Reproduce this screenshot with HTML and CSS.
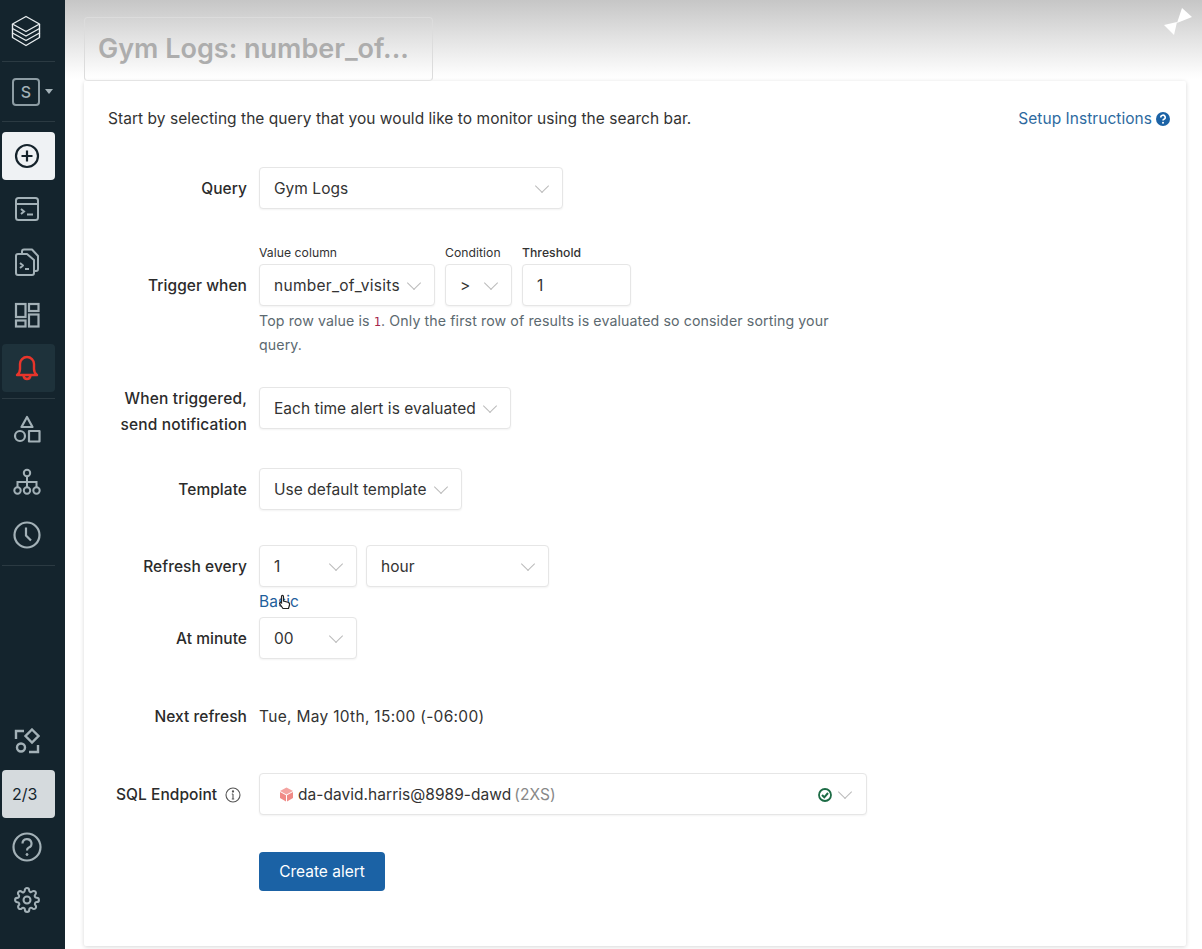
FILE: index.html
```html
<!doctype html>
<html>
<head>
<meta charset="UTF-8">
<title>Gym Logs: number_of_visits</title>
<link rel="stylesheet" href="styles.css">
</head>
<body>
<nav class="sidebar">
  <div class="logo">
    <svg width="30" height="32" viewBox="0 0 30 32" fill="none" stroke="#e8edef" stroke-width="1.400" stroke-linejoin="round"><path d="M15 1.500 28.500 9 15 16.500 1.500 9Z"/><path d="M1.500 9V13.500L15 21 28.500 13.500V9"/><path d="M1.500 13.500V18L15 25.500 28.500 18V13.500"/><path d="M1.500 18V22.500L15 30.500 28.500 22.500V18"/></svg>
  </div>
  <div class="side-line"></div>
  <div class="workspace"><span class="ws-box">S</span><span class="ws-caret"></span></div>
  <div class="side-line"></div>
  <div class="side-group">
    <a class="side-item new">
      <svg width="26" height="26" viewBox="0 0 26 26" fill="none" stroke="#15232b" stroke-width="2.200"><circle cx="13" cy="13" r="11"/><path d="M13 7.500V18.500M7.500 13H18.500"/></svg>
    </a>
    <a class="side-item">
      <svg width="26" height="26" viewBox="0 0 26 26" fill="none" stroke="#a3b1b7" stroke-width="2"><rect x="2" y="2" width="22" height="22" rx="2.500"/><path d="M2 8H24M7 13l3 2.500-3 2.500M13 18.500H19"/></svg>
    </a>
    <a class="side-item">
      <svg width="26" height="28" viewBox="0 0 26 28" fill="none" stroke="#a3b1b7" stroke-width="2" stroke-linejoin="round"><path d="M8 5V3.500Q8 1.500 10 1.500H18L24 8V21Q24 23 22 23H20"/><path d="M2 8Q2 6 4 6H13L20 12V25Q20 27 18 27H4Q2 27 2 25Z"/><path d="M6 15l3 2.500-3 2.500M11 21H15"/></svg>
    </a>
    <a class="side-item">
      <svg width="26" height="26" viewBox="0 0 26 26" fill="none" stroke="#a3b1b7" stroke-width="2.200"><rect x="2" y="2" width="9.500" height="13"/><rect x="15" y="2" width="9.500" height="7"/><rect x="2" y="18.500" width="9.500" height="6"/><rect x="15" y="12.500" width="9.500" height="12"/></svg>
    </a>
    <a class="side-item alert">
      <svg width="26" height="28" viewBox="0 0 26 28" fill="none" stroke="#e8352b" stroke-width="2.400" stroke-linejoin="round"><path d="M3 21Q6 19 6 15V10A7 7 0 0 1 20 10V15Q20 19 23 21Z"/><path d="M9.500 21.500Q10 25 13 25T16.500 21.500"/></svg>
    </a>
  </div>
  <div class="side-line gap-line"></div>
  <div class="side-group">
    <a class="side-item">
      <svg width="28" height="28" viewBox="0 0 28 28" fill="none" stroke="#a3b1b7" stroke-width="2.200" stroke-linejoin="round"><path d="M14 2 19.500 12H8.500Z"/><circle cx="7" cy="21" r="5"/><rect x="16" y="16" width="10.500" height="10.500"/></svg>
    </a>
    <a class="side-item">
      <svg width="28" height="28" viewBox="0 0 28 28" fill="none" stroke="#a3b1b7" stroke-width="2"><circle cx="14" cy="5" r="3.200"/><circle cx="4.500" cy="22.500" r="3.200"/><circle cx="14" cy="22.500" r="3.200"/><circle cx="23.500" cy="22.500" r="3.200"/><path d="M14 8.200V19.300M4.500 19.300V14H23.500V19.300"/></svg>
    </a>
    <a class="side-item">
      <svg width="28" height="28" viewBox="0 0 28 28" fill="none" stroke="#a3b1b7" stroke-width="2.200"><circle cx="14" cy="14" r="12.500"/><path d="M13 6.500V14.500L18 19.500"/></svg>
    </a>
  </div>
  <div class="side-line gap-line"></div>
  <div class="side-group bottom">
    <a class="side-item">
      <svg width="26" height="26" viewBox="0 0 26 26" fill="none" stroke="#a3b1b7" stroke-width="2.400"><path d="M2 11V3H10"/><path d="M18 1.500 24.500 8 18 14.500 11.500 8Z"/><circle cx="7" cy="19.500" r="4"/><path d="M15 24H24V17"/></svg>
    </a>
    <a class="side-item progress">2/3</a>
    <a class="side-item">
      <svg width="30" height="30" viewBox="0 0 30 30" fill="none" stroke="#a3b1b7" stroke-width="2.200"><circle cx="15" cy="15" r="13.500"/><path d="M10.500 11.500A4.500 4.500 0 1 1 16.500 15.800Q15 16.500 15 18.500"/><circle cx="15" cy="22.500" r="1" fill="#a3b1b7" stroke-width="1"/></svg>
    </a>
    <a class="side-item">
      <svg width="26" height="26" viewBox="0 0 24 24" fill="none" stroke="#a3b1b7" stroke-width="1.900" stroke-linejoin="round"><circle cx="12" cy="12" r="3.200"/><path d="M19.400 15a1.650 1.650 0 0 0 .33 1.820l.06.06a2 2 0 1 1-2.830 2.830l-.06-.06a1.650 1.650 0 0 0-2.820 1.170V21a2 2 0 0 1-4 0v-.09A1.650 1.650 0 0 0 7.260 19.700l-.06.06a2 2 0 1 1-2.830-2.830l.06-.06a1.650 1.650 0 0 0-1.170-2.820H3a2 2 0 0 1 0-4h.09A1.650 1.650 0 0 0 4.300 7.260l-.06-.06a2 2 0 1 1 2.830-2.830l.06.06a1.650 1.650 0 0 0 2.820-1.170V3a2 2 0 0 1 4 0v.09a1.650 1.650 0 0 0 2.790 1.170l.06-.06a2 2 0 1 1 2.830 2.830l-.06.06a1.650 1.650 0 0 0 1.170 2.820H21a2 2 0 0 1 0 4h-.09A1.650 1.650 0 0 0 19.400 15z"/></svg>
    </a>
  </div>
</nav>

<main class="main">
  <svg class="bowtie" width="30" height="30" viewBox="0 0 30 30" fill="#fff"><path d="M19 2 29 11 14 17Z"/><path d="M1 19 14 16 11 29Z"/></svg>
  <div class="title-tab">Gym Logs: number_of...</div>
  <section class="card">
    <div class="intro">
      <span>Start by selecting the query that you would like to monitor using the search bar.</span>
      <a class="setup">Setup Instructions
        <svg width="14" height="14" viewBox="0 0 14 14"><circle cx="7" cy="7" r="7" fill="#1b62a5"/><path d="M4.800 5.500A2.200 2.200 0 1 1 8 7.300Q7 7.800 7 8.600" fill="none" stroke="#fff" stroke-width="1.600"/><circle cx="7" cy="10.800" r="1" fill="#fff"/></svg>
      </a>
    </div>

    <div class="row row-query">
      <label class="label">Query</label>
      <div class="select w-query">Gym Logs<i class="chev"></i></div>
    </div>

    <div class="row row-trigger">
      <label class="label trigger-label">Trigger when</label>
      <div class="control">
        <div class="fields">
          <div class="field">
            <span class="mini">Value column</span>
            <div class="select w-column">number_of_visits<i class="chev"></i></div>
          </div>
          <div class="field">
            <span class="mini">Condition</span>
            <div class="select w-cond">&gt;<i class="chev"></i></div>
          </div>
          <div class="field">
            <span class="mini strong">Threshold</span>
            <div class="select w-thresh">1</div>
          </div>
        </div>
        <p class="help">Top row value is <span class="red">1</span>. Only the first row of results is evaluated so consider sorting your query.</p>
      </div>
    </div>

    <div class="row row-notify">
      <label class="label two-line">When triggered, send notification</label>
      <div class="select w-notify">Each time alert is evaluated<i class="chev"></i></div>
    </div>

    <div class="row row-template">
      <label class="label">Template</label>
      <div class="select w-template">Use default template<i class="chev"></i></div>
    </div>

    <div class="row row-refresh">
      <label class="label">Refresh every</label>
      <div class="fields gap-9">
        <div class="select w-small">1<i class="chev"></i></div>
        <div class="select w-unit">hour<i class="chev"></i></div>
      </div>
    </div>
    <div class="row">
      <span class="label"></span>
      <a class="basic">Basic
        <svg class="cursor" width="14" height="16" viewBox="0 0 14 16"><path d="M4 1.500Q5.500 1 5.500 3V7L9 8Q12 8.500 11.500 11L10.500 14.500H5L1.500 9.500Q1.500 8 3.500 9V3Q3.500 2 4 1.500Z" fill="#fff" stroke="#222" stroke-width="1.200"/></svg>
      </a>
    </div>
    <div class="row row-minute">
      <label class="label">At minute</label>
      <div class="select w-small">00<i class="chev"></i></div>
    </div>

    <div class="row row-next">
      <label class="label">Next refresh</label>
      <div class="plain">Tue, May 10th, 15:00 (-06:00)</div>
    </div>

    <div class="row row-sql">
      <label class="label sql-label">SQL Endpoint
        <svg width="16" height="16" viewBox="0 0 16 16" fill="none" stroke="#555" stroke-width="1.100"><circle cx="8" cy="8" r="7"/><path d="M8 7V12M6.800 12H9.200M6.800 7H8" /><circle cx="8" cy="4.500" r=".6" fill="#555"/></svg>
      </label>
      <div class="select w-sql">
        <svg class="cube" width="15" height="15" viewBox="0 0 15 15"><path d="M7.500 .5 14 4 7.500 7.500 1 4Z" fill="#f4a3a0"/><path d="M1 5 7 8.300V14.500L1 11Z" fill="#f08a86"/><path d="M14 5 8 8.300V14.500L14 11Z" fill="#f08a86"/></svg>
        <span>da-david.harris@8989-dawd</span><span class="muted">(2XS)</span>
        <svg class="ok" width="14" height="14" viewBox="0 0 14 14" fill="none"><circle cx="7" cy="7" r="6" stroke="#1c6b45" stroke-width="1.800"/><path d="M4 7l2.300 2.300L10 5" stroke="#1c6b45" stroke-width="2"/></svg>
        <i class="chev end"></i>
      </div>
    </div>

    <div class="row row-submit">
      <span class="label"></span>
      <button class="primary">Create alert</button>
    </div>
  </section>
</main>
</body>
</html>
```

FILE: styles.css
```css
* { box-sizing: border-box; }
html, body { height: 100%; }
body {
  margin: 0;
  display: flex;
  height: 949px;
  overflow: hidden;
  font: 15.5px/24px Inter, "Noto Sans", sans-serif;
  letter-spacing: .04px;
  color: #333;
  background: #fff;
}

/* sidebar */
.sidebar {
  width: 65px;
  flex: none;
  display: flex;
  flex-direction: column;
  padding: 0 10px 25px 2px;
  background: #14242d;
  color: #a3b1b7;
}
.logo { height: 61px; display: flex; align-items: center; justify-content: center; padding-right: 5px; }
.side-line { height: 1px; background: #2b3a42; flex: none; }
.gap-line { margin: 6px 0 6px; }
.workspace { height: 59px; display: flex; align-items: center; padding-left: 10px; gap: 5px; }
.ws-box {
  width: 28px;
  height: 28px;
  border: 2px solid #8d9ca3;
  border-radius: 4px;
  display: flex;
  align-items: center;
  justify-content: center;
  font-size: 16px;
  font-weight: 500;
}
.ws-caret { width: 0; height: 0; border: 4px solid transparent; border-top: 5px solid #a3b1b7; border-bottom: 0; }
.side-group { display: flex; flex-direction: column; gap: 5px; margin-top: 10px; }
.side-group + .side-line { margin-top: 6px; }
.gap-line + .side-group { margin-top: 0; }
.bottom { margin-top: auto !important; gap: 5px; }
.side-item {
  height: 48px;
  display: flex;
  align-items: center;
  justify-content: center;
  padding-right: 3px;
  border-radius: 4px;
}
.new { background: #eff2f4; }
.alert { background: #1e323b; }
.progress { background: #d5dadd; color: #14242d; font-size: 16px; justify-content: flex-start; padding-left: 10px; }

/* main area */
.main {
  flex: 1;
  position: relative;
  display: flex;
  flex-direction: column;
  padding: 17px 16px 3px 19px;
  background: linear-gradient(#c6c6c6 0, #e4e4e4 40px, #fdfdfd 75px, #fff 80px);
}
.bowtie { position: absolute; top: 6px; right: 9px; }
.title-tab {
  width: 349px;
  height: 64px;
  flex: none;
  padding: 13px 0 0 13px;
  border: 1px solid #dcdcdc;
  border-bottom-color: #eee;
  border-radius: 4px;
  font-size: 27px;
  line-height: 36px;
  font-weight: 600;
  letter-spacing: 0;
  color: #adadad;
  white-space: nowrap;
}
.card {
  flex: 1;
  padding: 25px 16px 0 24px;
  background: #fff;
  border-radius: 2px;
  box-shadow: 0 1px 4px rgba(0, 0, 0, .16);
}
.intro { display: flex; justify-content: space-between; align-items: center; height: 24px; margin-bottom: 37px; padding-top: 1px; }
.setup { color: #2d6a9f; display: flex; align-items: center; gap: 4px; }

/* form rows */
.row { display: flex; gap: 12px; }
.label { width: 139px; flex: none; text-align: right; font-weight: 500; letter-spacing: .05px; color: #2b2b2b; line-height: 43px; }
.two-line { line-height: 26px; margin-top: -1px; letter-spacing: .15px; }
.select {
  height: 42px;
  display: flex;
  align-items: center;
  padding: 1px 13px 0 14px;
  background: #fff;
  border: 1px solid #e6e6e6;
  border-radius: 4px;
  box-shadow: 0 1px 2px rgba(0, 0, 0, .05);
  white-space: nowrap;
  color: #333;
}
.chev {
  width: 10px;
  height: 10px;
  margin: -6px 2px 0 auto;
  border-right: 1px solid #bbb;
  border-bottom: 1px solid #bbb;
  transform: rotate(45deg);
  flex: none;
}
.w-query { width: 304px; }
.w-column { width: 176px; letter-spacing: .28px; }
.w-cond { width: 67px; }
.w-thresh { width: 109px; }
.w-notify { width: 252px; }
.w-template { width: 203px; }
.w-small { width: 98px; }
.w-unit { width: 183px; }
.w-sql { width: 608px; gap: 3px; padding-left: 19px; }
.w-sql .cube { margin-right: 1px; }

.row-trigger { margin-top: 35px; }
.trigger-label { margin-top: 19px; }
.fields { display: flex; gap: 10px; }
.field { display: flex; flex-direction: column; }
.mini { font-size: 12.200px; line-height: 16px; margin-bottom: 3px; color: #333; }
.strong { font-weight: 500; }
.control { width: 580px; }
.help { margin: 3px 0 0; color: #5c6970; font-size: 14.200px; line-height: 24px; letter-spacing: .1px; }
.red { color: #a5264a; font-family: "DejaVu Sans Mono", monospace; font-size: 12px; line-height: 1; }

.row-notify { margin-top: 30px; }
.row-template { margin-top: 30px; }
.row-refresh { margin-top: 34px; }
.gap-9 { gap: 9px; }
.basic { position: relative; color: #1f5f9c; height: 29px; line-height: 28px; }
.cursor { position: absolute; left: 19px; top: 6px; }
.row-next { margin-top: 35px; }
.plain { line-height: 42px; letter-spacing: .3px; padding-top: 1px; }
.row-sql { margin-top: 35px; }
.sql-label { text-align: left; padding-left: 8px; display: flex; align-items: center; gap: 8px; white-space: nowrap; }
.cube { flex: none; }
.muted { color: #888; }
.ok { margin-left: auto; margin-right: 5px; }
.chev.end { margin-left: 0; margin-right: 3px; }
.row-submit { margin-top: 36px; }
.primary {
  height: 39px;
  width: 126px;
  border: 0;
  border-radius: 4px;
  background: #1b62a5;
  color: #fff;
  font: 15.5px Inter, "Noto Sans", sans-serif;
}
```
